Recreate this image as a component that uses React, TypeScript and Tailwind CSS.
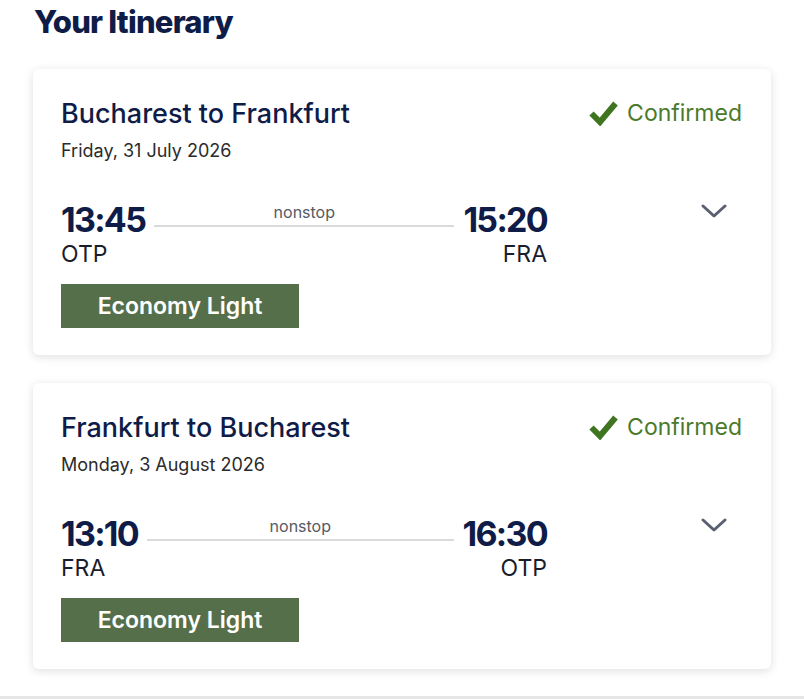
const flights = [
  {
    title: "Bucharest to Frankfurt",
    date: "Friday, 31 July 2026",
    depTime: "13:45",
    depCode: "OTP",
    arrTime: "15:20",
    arrCode: "FRA",
    fare: "Economy Light",
  },
  {
    title: "Frankfurt to Bucharest",
    date: "Monday, 3 August 2026",
    depTime: "13:10",
    depCode: "FRA",
    arrTime: "16:30",
    arrCode: "OTP",
    fare: "Economy Light",
  },
];

const CheckIcon = () => (
  <svg width="29" height="25" viewBox="0 0 29 25" fill="none">
    <path d="M2.5 12.5 L11 21 L26.5 2.5" stroke="#3f7420" strokeWidth="6" strokeLinejoin="miter" />
  </svg>
);

const Chevron = () => (
  <svg width="26" height="14" viewBox="0 0 26 14" fill="none">
    <path d="M2 2 L13 12 L24 2" stroke="#5a6072" strokeWidth="3" strokeLinecap="round" strokeLinejoin="round" />
  </svg>
);

const App = () => {
  return (
    <div className="h-[699px] bg-white border-b-[3px] border-[#e6e6e6] font-['Inter',sans-serif] text-[#0f1c47]">
      <h1 className="pl-[34px] pt-[3px] text-[31px] leading-[38px] font-extrabold tracking-tight">
        Your Itinerary
      </h1>
      <div className="mt-[28px] flex flex-col gap-[28px] mx-[33px]">
        {flights.map((f, i) => (
          <div
            key={i}
            className="bg-white rounded-md shadow-[0_2px_10px_rgba(0,0,0,0.13)] pl-[28px] pr-[29px] pt-[29px] pb-[27px]"
          >
            <div className="flex items-start justify-between">
              <div>
                <h2 className="text-[27px] leading-[32px] font-medium">{f.title}</h2>
                <p className="mt-[9px] text-[18px] leading-[24px] text-[#2b2b2b]">{f.date}</p>
              </div>
              <div className="flex items-center gap-[9px]">
                <CheckIcon />
                <span className="text-[23px] leading-[30px] text-[#4b7a2b]">Confirmed</span>
              </div>
            </div>

            <div className="mt-[37px] flex items-start">
              <div className="flex w-[486px]">
                <div>
                  <div className="text-[34px] leading-[40px] font-bold tracking-[-0.05em]">{f.depTime}</div>
                  <div className="text-[23px] leading-[28px] text-[#1a1d2b]">{f.depCode}</div>
                </div>
                <div className="flex-1 mx-[9px] flex flex-col">
                  <div className="pt-[2px] text-center text-[16px] leading-[20px] text-[#555a63]">nonstop</div>
                  <div className="mt-[3px] h-[2px] bg-[#dadada]" />
                </div>
                <div className="text-right">
                  <div className="text-[34px] leading-[40px] font-bold tracking-[-0.05em]">{f.arrTime}</div>
                  <div className="text-[23px] leading-[28px] text-[#1a1d2b]">{f.arrCode}</div>
                </div>
              </div>
              <div className="ml-auto mr-[15px] mt-[4px]">
                <Chevron />
              </div>
            </div>

            <div className="mt-[16px] w-[238px] h-[44px] bg-[#566f4b] flex items-center justify-center text-white text-[23px] font-semibold">
              {f.fare}
            </div>
          </div>
        ))}
      </div>
    </div>
  );
};

export default App;
